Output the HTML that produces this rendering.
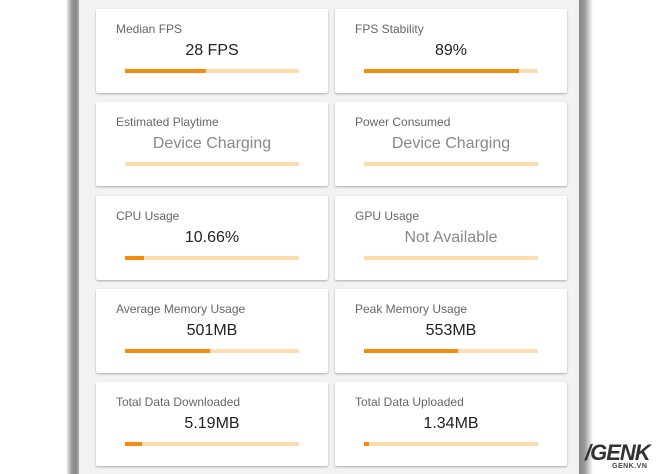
<!DOCTYPE html><html><head><style>
body{margin:0;width:660px;height:474px;background:#fff;position:relative;overflow:hidden;font-family:"Liberation Sans",sans-serif}
.l{position:absolute;left:66px;top:0;width:14px;height:474px;background:linear-gradient(90deg,#fff,#999 40%,#888 70%,#bbb)}
.r{position:absolute;left:579px;top:0;width:14px;height:474px;background:linear-gradient(90deg,#888,#999 40%,#ddd 80%,#fff)}
.p{position:absolute;left:79px;top:0;width:500px;height:474px;background:#f2f2f2}
.c{position:absolute;width:232px;height:84px;background:#fff;border-radius:2px;box-shadow:0 1px 2px rgba(0,0,0,.3)}
.t{position:absolute;left:20px;top:13px;font-size:12px;color:#666}
.v{position:absolute;left:0;right:0;top:33px;text-align:center;font-size:16px;color:#222}
.v.g{color:#888}
.b{position:absolute;left:29px;top:60px;width:174px;height:4px;background:#fddcae}
.b i{display:block;height:4px;background:#f58a0d}
.w{position:absolute;left:585px;top:440px;font:italic 900 22px "Liberation Sans",sans-serif;color:#333;letter-spacing:-1px}
.w2{position:absolute;left:612px;top:463px;font:bold 7px "Liberation Sans",sans-serif;color:#444;letter-spacing:0.5px}
</style></head><body>
<div class="l"></div><div class="p"></div><div class="r"></div>
<div class="c" style="left:96px;top:9px"><div class="t">Median FPS</div><div class="v">28 FPS</div><div class="b"><i style="width:81px"></i></div></div>
<div class="c" style="left:335px;top:9px"><div class="t">FPS Stability</div><div class="v">89%</div><div class="b"><i style="width:155px"></i></div></div>
<div class="c" style="left:96px;top:102px"><div class="t">Estimated Playtime</div><div class="v g">Device Charging</div><div class="b"></div></div>
<div class="c" style="left:335px;top:102px"><div class="t">Power Consumed</div><div class="v g">Device Charging</div><div class="b"></div></div>
<div class="c" style="left:96px;top:196px"><div class="t">CPU Usage</div><div class="v">10.66%</div><div class="b"><i style="width:19px"></i></div></div>
<div class="c" style="left:335px;top:196px"><div class="t">GPU Usage</div><div class="v g">Not Available</div><div class="b"></div></div>
<div class="c" style="left:96px;top:289px"><div class="t">Average Memory Usage</div><div class="v">501MB</div><div class="b"><i style="width:85px"></i></div></div>
<div class="c" style="left:335px;top:289px"><div class="t">Peak Memory Usage</div><div class="v">553MB</div><div class="b"><i style="width:94px"></i></div></div>
<div class="c" style="left:96px;top:382px"><div class="t">Total Data Downloaded</div><div class="v">5.19MB</div><div class="b"><i style="width:17px"></i></div></div>
<div class="c" style="left:335px;top:382px"><div class="t">Total Data Uploaded</div><div class="v">1.34MB</div><div class="b"><i style="width:5px"></i></div></div>
<div class="w">/GENK</div><div class="w2">GENK.VN</div>
</body></html>
